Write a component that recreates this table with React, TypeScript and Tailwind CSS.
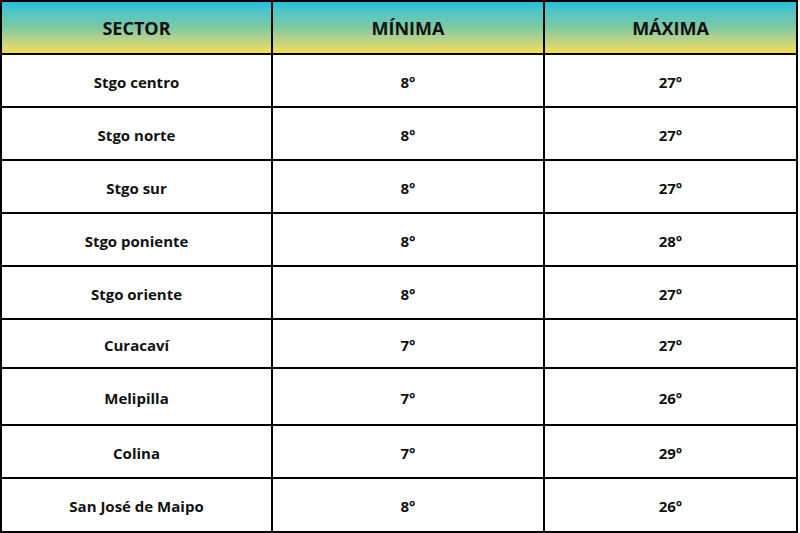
import { Fragment } from "react";

const rows = [
  { sector: "Stgo centro", min: "8°", max: "27°", h: "h-[51px]" },
  { sector: "Stgo norte", min: "8°", max: "27°", h: "h-[51px]" },
  { sector: "Stgo sur", min: "8°", max: "27°", h: "h-[51px]" },
  { sector: "Stgo poniente", min: "8°", max: "28°", h: "h-[51px]" },
  { sector: "Stgo oriente", min: "8°", max: "27°", h: "h-[51px]" },
  { sector: "Curacaví", min: "7°", max: "27°", h: "h-[47px]" },
  { sector: "Melipilla", min: "7°", max: "26°", h: "h-[55px]" },
  { sector: "Colina", min: "7°", max: "29°", h: "h-[51px]" },
  { sector: "San José de Maipo", min: "8°", max: "26°", h: "h-[52px]" },
];

const HeadCell = ({ children }: { children: React.ReactNode }) => (
  <div className="h-[51px] pt-[2px] flex items-center justify-center bg-gradient-to-b from-[#1cbfdc] via-[#7fc9a0] to-[#f3dc55] text-[18px] font-bold text-[#111]">
    {children}
  </div>
);

const Cell = ({ children, h }: { children: React.ReactNode; h: string }) => (
  <div className={`${h} pt-[3px] flex items-center justify-center bg-white text-[15px] font-bold text-[#111]`}>
    {children}
  </div>
);

export default function App() {
  return (
    <div className="w-[800px] h-[533px] bg-white font-['Open_Sans',sans-serif]">
      <div className="w-[798px] grid grid-cols-[269px_270px_1fr] gap-[2px] p-[2px] bg-black">
        <HeadCell>SECTOR</HeadCell>
        <HeadCell>MÍNIMA</HeadCell>
        <HeadCell>MÁXIMA</HeadCell>
        {rows.map((r) => (
          <Fragment key={r.sector}>
            <Cell h={r.h}>{r.sector}</Cell>
            <Cell h={r.h}>{r.min}</Cell>
            <Cell h={r.h}>{r.max}</Cell>
          </Fragment>
        ))}
      </div>
    </div>
  );
}
